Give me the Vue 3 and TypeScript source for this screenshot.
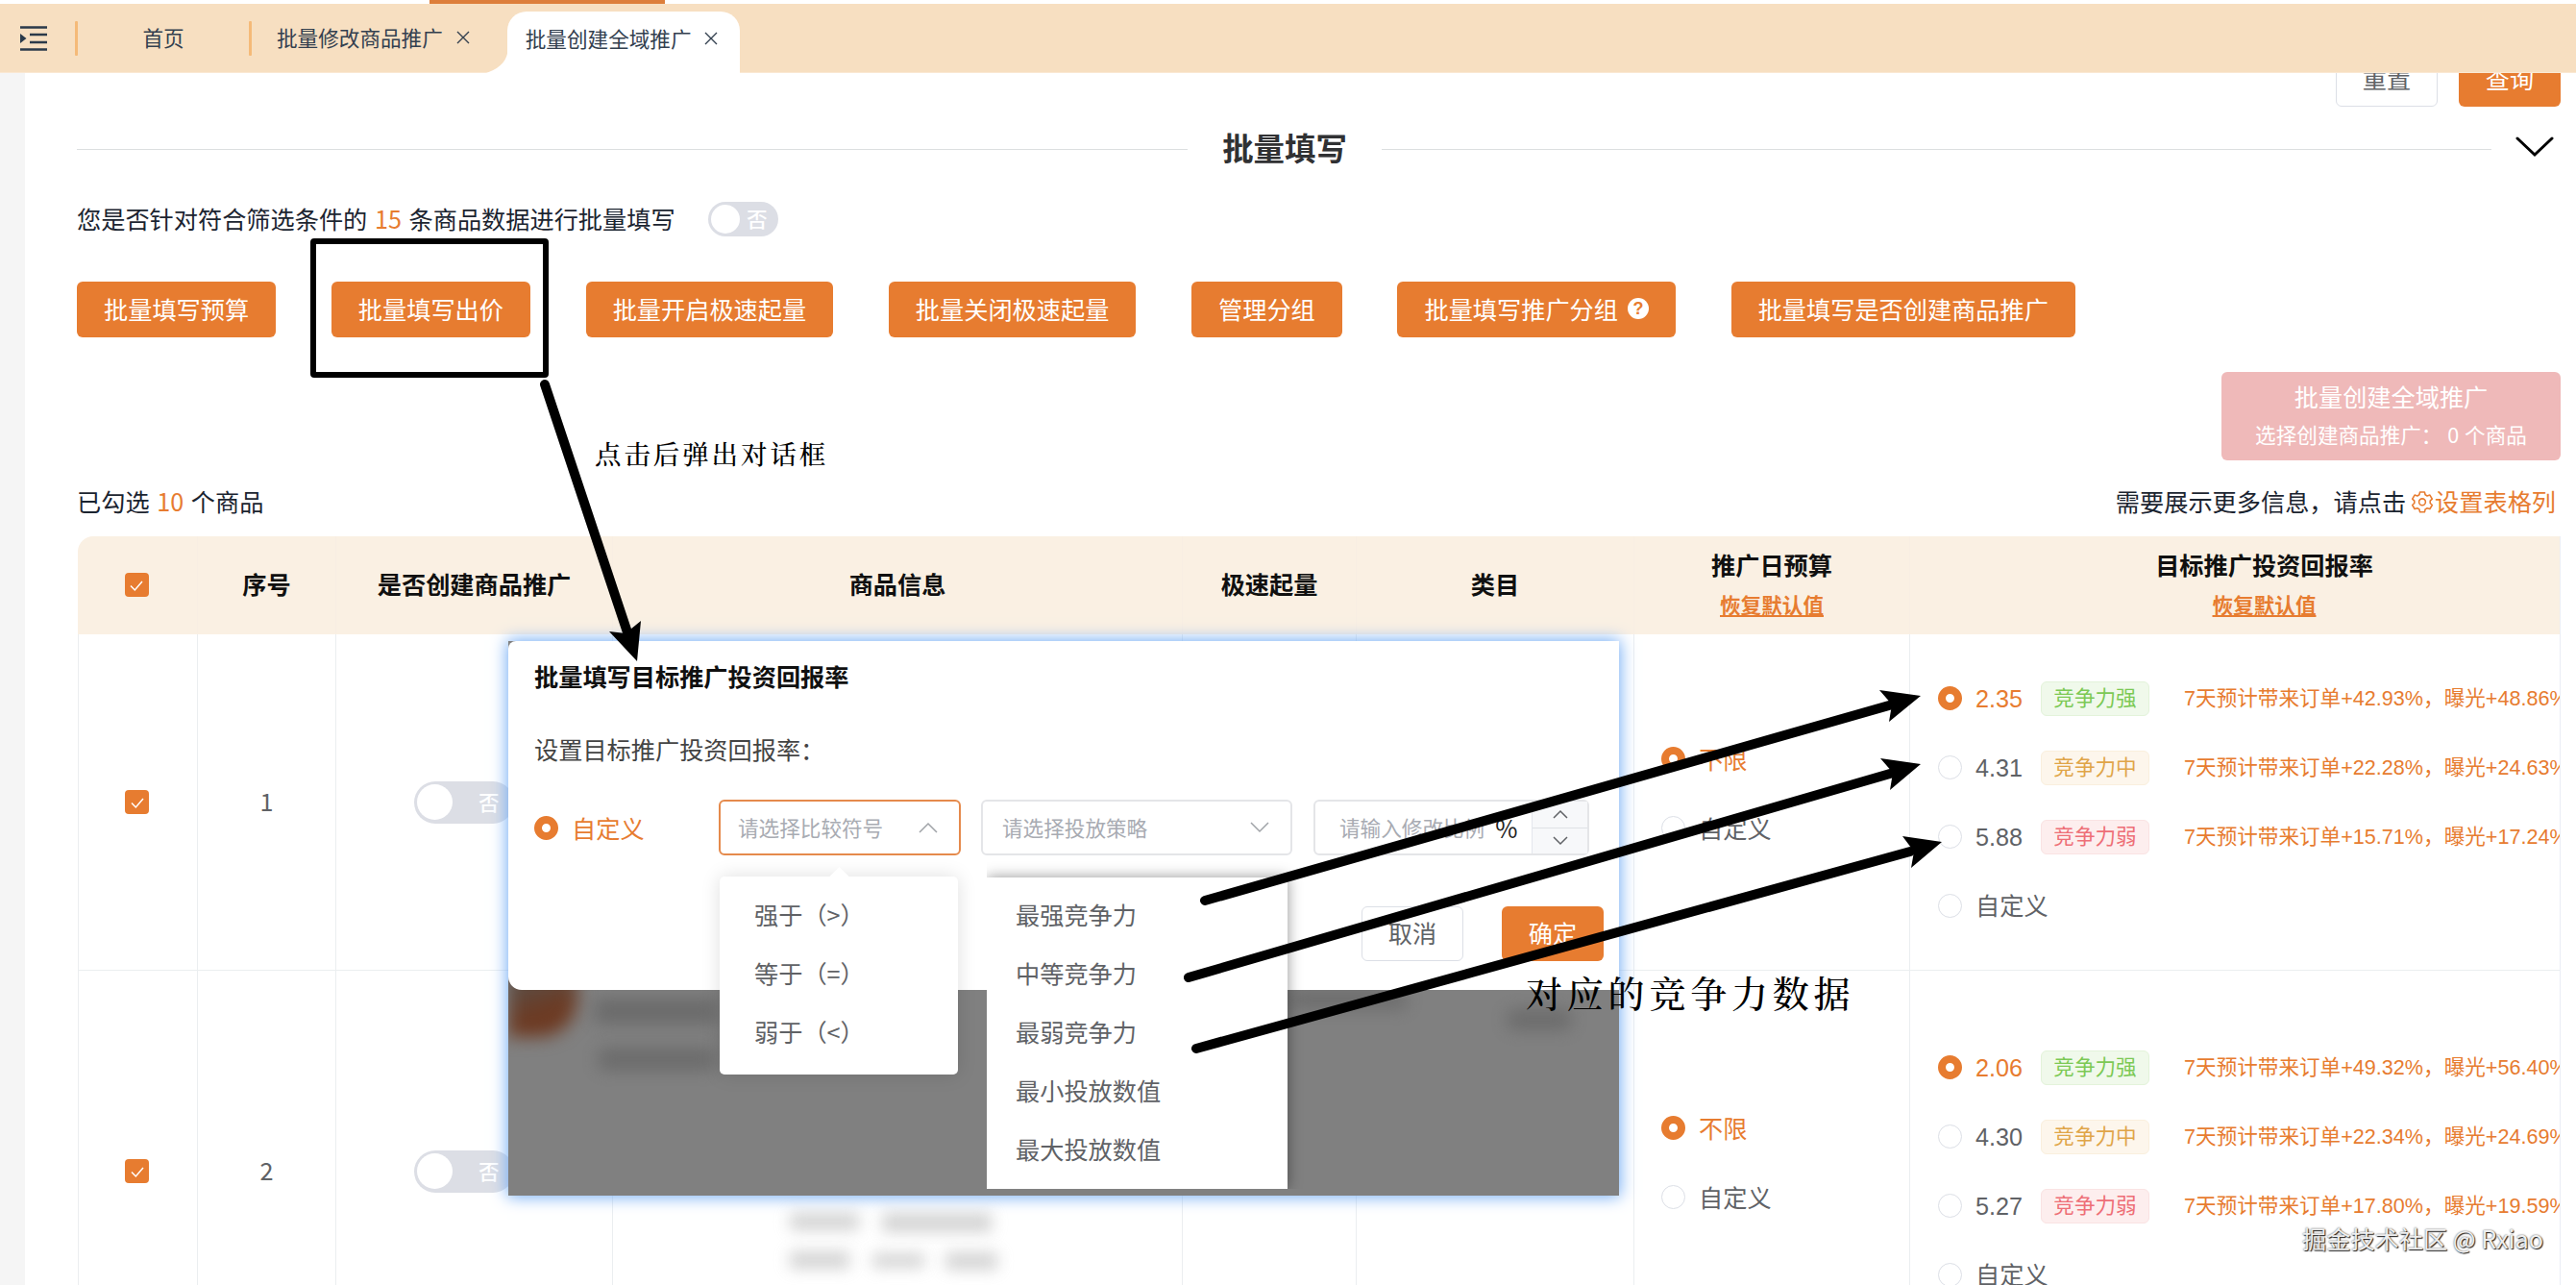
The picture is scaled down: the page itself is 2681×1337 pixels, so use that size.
<script setup lang="ts">
interface RoiOption { value: string; level: string; tone: string; order: string; exposure: string; checked: boolean }
interface Row { no: number; roi: RoiOption[] }

const actions: { label: string; help?: boolean }[] = [
  { label: '批量填写预算' },
  { label: '批量填写出价' },
  { label: '批量开启极速起量' },
  { label: '批量关闭极速起量' },
  { label: '管理分组' },
  { label: '批量填写推广分组', help: true },
  { label: '批量填写是否创建商品推广' },
]

const rows: Row[] = [
  {
    no: 1,
    roi: [
      { value: '2.35', level: '竞争力强', tone: 'green', order: '42.93', exposure: '48.86', checked: true },
      { value: '4.31', level: '竞争力中', tone: 'amber', order: '22.28', exposure: '24.63', checked: false },
      { value: '5.88', level: '竞争力弱', tone: 'red', order: '15.71', exposure: '17.24', checked: false },
    ],
  },
  {
    no: 2,
    roi: [
      { value: '2.06', level: '竞争力强', tone: 'green', order: '49.32', exposure: '56.40', checked: true },
      { value: '4.30', level: '竞争力中', tone: 'amber', order: '22.34', exposure: '24.69', checked: false },
      { value: '5.27', level: '竞争力弱', tone: 'red', order: '17.80', exposure: '19.59', checked: false },
    ],
  },
]

const operators: string[] = ['强于（>）', '等于（=）', '弱于（<）']
const strategies: string[] = ['最强竞争力', '中等竞争力', '最弱竞争力', '最小投放数值', '最大投放数值']
</script>

<template>
  <div class="screen">
    <div class="topline"><i></i></div>
    <header class="tabs">
      <svg class="menu" width="28" height="26" viewBox="0 0 28 26">
        <path d="M0 1.5H28M10 9H28M10 17H28M0 24.5H28" stroke="#2b3a4a" stroke-width="2.6" fill="none" />
        <path d="M0 8L6.5 13L0 18Z" fill="#2b3a4a" />
      </svg>
      <i class="sep"></i>
      <span class="tab home">首页</span>
      <i class="sep"></i>
      <span class="tab">批量修改商品推广
        <svg class="x" width="14" height="14" viewBox="0 0 14 14"><path d="M1 1L13 13M13 1L1 13" /></svg>
      </span>
      <span class="tab active">
        <svg class="flare" width="23" height="26" viewBox="0 0 23 26"><path d="M23 0C22 13 15 21 0 26H23Z" fill="#fff" /></svg>
        批量创建全域推广
        <svg class="x" width="14" height="14" viewBox="0 0 14 14"><path d="M1 1L13 13M13 1L1 13" /></svg>
      </span>
    </header>

    <main class="page">
      <div class="query">
        <button class="btn plain">重置</button>
        <button class="btn">查询</button>
      </div>

      <div class="divider">
        <i class="l1"></i><h2>批量填写</h2><i class="l2"></i>
        <svg width="40" height="22" viewBox="0 0 40 22"><path d="M2 2L20 19L38 2" fill="none" stroke="#000" stroke-width="3" stroke-linecap="round" /></svg>
      </div>

      <div class="ask">
        <span class="line">您是否针对符合筛选条件的 <em>15</em> 条商品数据进行批量填写</span>
        <span class="switch small"><i></i><b>否</b></span>
      </div>

      <div class="actions">
        <button v-for="a in actions" :key="a.label" class="btn">
          {{ a.label }}<span v-if="a.help" class="help">?</span>
        </button>
      </div>

      <div class="create">
        <div class="create-box"><p>批量创建全域推广</p><small>选择创建商品推广： 0 个商品</small></div>
      </div>

      <div class="info">
        <span class="line">已勾选 <em>10</em> 个商品</span>
        <span class="more">需要展示更多信息，请点击
          <em>
            <svg width="24" height="24" viewBox="0 0 24 24" fill="none" stroke="#e77c30" stroke-width="1.6" stroke-linejoin="round">
              <path d="M9.6 2h4.8l.7 2.8 2 1.2 2.8-.9 2.400 4.100-2.100 2v2.300l2.100 2-2.400 4.100-2.800-.9-2 1.200-.7 2.800H9.600l-.7-2.800-2-1.200-2.800.9-2.400-4.100 2.100-2v-2.300l-2.100-2 2.400-4.100 2.800.9 2-1.200z" />
              <circle cx="12" cy="12.300" r="3.400" />
            </svg>设置表格列</em>
        </span>
      </div>

      <section class="table">
        <div class="tr head">
          <div class="c pick"><span class="check"><svg width="18" height="18" viewBox="0 0 18 18"><path d="M3 9.500L7.300 14L15 5" /></svg></span></div>
          <div class="c txt">序号</div>
          <div class="c txt">是否创建商品推广</div>
          <div class="c txt">商品信息</div>
          <div class="c txt">极速起量</div>
          <div class="c txt">类目</div>
          <div class="c two">推广日预算<u>恢复默认值</u></div>
          <div class="c two">目标推广投资回报率<u>恢复默认值</u></div>
        </div>
        <div v-for="r in rows" :key="r.no" class="tr body" :class="'row' + r.no">
          <div class="c pick"><span class="check"><svg width="18" height="18" viewBox="0 0 18 18"><path d="M3 9.500L7.300 14L15 5" /></svg></span></div>
          <div class="c txt">{{ r.no }}</div>
          <div class="c"><span class="switch"><i></i><b>否</b></span></div>
          <div class="c"></div>
          <div class="c"></div>
          <div class="c"></div>
          <div class="c radios budget">
            <label class="on"><i class="radio"></i>不限</label>
            <label><i class="radio"></i>自定义</label>
          </div>
          <div class="c radios roi">
            <label v-for="o in r.roi" :key="o.value" :class="{ on: o.checked }">
              <i class="radio"></i>{{ o.value }}<span class="tag" :class="o.tone">{{ o.level }}</span>
              <span class="est">7天预计带来订单+{{ o.order }}%，曝光+{{ o.exposure }}%</span>
            </label>
            <label><i class="radio"></i>自定义</label>
          </div>
        </div>
      </section>
    </main>

    <div class="smudge s1"></div><div class="smudge s2"></div>
    <div class="smudge s3"></div><div class="smudge s4"></div><div class="smudge s5"></div>

    <section class="shot">
      <div class="brown"></div>
      <div class="dark d1"></div><div class="dark d2"></div><div class="dark d3"></div><div class="dark d4"></div>
      <div class="dialog">
        <h3>批量填写目标推广投资回报率</h3>
        <p>设置目标推广投资回报率：</p>
        <div class="form">
          <label class="on"><i class="radio"></i>自定义</label>
          <div class="field f1">请选择比较符号
            <svg width="20" height="12" viewBox="0 0 20 12"><path d="M1 11L10 2L19 11" /></svg>
          </div>
          <div class="field f2">请选择投放策略
            <svg width="20" height="12" viewBox="0 0 20 12"><path d="M1 1L10 10L19 1" /></svg>
          </div>
          <div class="field f3">
            <span>请输入修改比例</span><b>%</b>
            <div class="spin">
              <i><svg width="16" height="10" viewBox="0 0 16 10"><path d="M1 9L8 2L15 9" /></svg></i>
              <i><svg width="16" height="10" viewBox="0 0 16 10"><path d="M1 1L8 8L15 1" /></svg></i>
            </div>
          </div>
        </div>
        <div class="foot"><button class="btn plain">取消</button><button class="btn">确定</button></div>
      </div>
      <ul class="menu1"><li v-for="o in operators" :key="o">{{ o }}</li></ul>
      <ul class="menu2"><li v-for="s in strategies" :key="s">{{ s }}</li></ul>
    </section>

    <svg class="marks" width="2681" height="1337" viewBox="0 0 2681 1337">
      <rect x="326" y="251" width="242" height="139" rx="1" fill="none" stroke="#000" stroke-width="6" />
      <g stroke="#000" stroke-width="10" stroke-linecap="round">
        <path d="M567 400L653 658" />
        <path d="M1254 937L1966 734" />
        <path d="M1237 1017L1967 805" />
        <path d="M1245 1091L1988 886" />
      </g>
      <path d="M663 688L634 657L651 659L667 646Z" />
      <path d="M1999 724L1956 718L1969 733L1966 751Z" />
      <path d="M1999 795L1957 789L1970 804L1967 822Z" />
      <path d="M2021 876L1980 870L1992 886L1989 903Z" />
    </svg>
    <div class="note n1">点击后弹出对话框</div>
    <div class="note n2">对应的竞争力数据</div>
    <div class="water">掘金技术社区 @ Rxiao</div>
  </div>
</template>

<style>
body { overflow: hidden; background: #fff; }
</style>

<style scoped>
* { box-sizing: border-box; }
.screen { position: relative; width: 2681px; height: 1337px; overflow: hidden; background: #fff; color: #1b2430; font: 25.2px/36px 'Noto Sans CJK SC', sans-serif; white-space: nowrap; }
em { font-style: normal; color: #e77c30; }
h2, h3, p, ul { margin: 0; padding: 0; list-style: none; }
.topline { height: 4px; padding-left: 447px; }
.topline i { display: block; width: 245px; height: 4px; background: #dd7e3b; }
.tabs { height: 72px; background: #f7dfc1; border-bottom: 1px solid #fae8d3; display: flex; align-items: center; padding: 0 0 0 21px; font-size: 21.6px; color: #33404f; }
.menu { flex: none; margin-right: 29px; }
.sep { width: 3px; height: 36px; background: #f5ba78; border-radius: 1px; }
.tab { display: flex; align-items: center; padding-bottom: 1px; }
.home { width: 178px; justify-content: center; }
.tab .x { margin-left: 14px; stroke: #33404f; stroke-width: 1.4; }
.sep + .tab:not(.home) { margin-left: 26px; }
.active { position: relative; align-self: flex-end; width: 242px; height: 64px; margin: 0 0 -1px 39px; padding: 0 0 8px 19px; background: #fff; border-radius: 20px 20px 0 0; }
.active .x { margin-left: 13px; }
.flare { position: absolute; left: -22px; bottom: 0; }
.page { height: 1261px; border-left: 26px solid #f5f5f5; padding-left: 54px; overflow: hidden; }
.btn { height: 58px; padding: 0 28px 3px; border: 0; border-radius: 6px; background: #e77c30; color: #fff; font: inherit; display: flex; align-items: center; justify-content: center; }
.plain { background: #fff; color: #606266; border: 1px solid #dcdfe6; }
.query { display: flex; justify-content: flex-end; gap: 22px; height: 35px; align-items: flex-end; padding-right: 16px; overflow: hidden; }
.query .btn { width: 106px; flex: none; }
.divider { display: flex; align-items: center; height: 48px; margin-top: 20px; }
.divider i { height: 1px; background: #dcdfe0; }
.l1 { width: 1156px; }
.l2 { width: 1155px; }
.divider h2 { width: 202px; text-align: center; font-size: 32.4px; font-weight: 700; color: #303133; padding-bottom: 4px; }
.divider svg { margin: -4px 0 0 25px; }
.ask { display: flex; align-items: center; height: 36px; margin-top: 31px; }
.line { padding-bottom: 2px; }
.line em { margin: 0 2px; }
.switch { display: flex; align-items: center; justify-content: space-between; width: 104px; height: 44px; border-radius: 22px; background: #dcdee5; padding: 0 12px 0 3px; color: #fff; font-size: 21.6px; }
.switch i { width: 37px; height: 37px; border-radius: 50%; background: #fff; }
.switch b { font-weight: 500; padding-bottom: 2px; }
.body .switch { margin-left: -22px; padding-right: 15px; }
.small { width: 73px; height: 36px; margin-left: 34px; padding-right: 11px; }
.small i { width: 30px; height: 30px; }
.actions { display: flex; gap: 57.7px; margin-top: 47px; }
.help { width: 22px; height: 22px; border-radius: 50%; background: #fff; color: #e77c30; font: bold 18px/22px 'Liberation Sans', sans-serif; margin-left: 10px; text-align: center; }
.create { display: flex; justify-content: flex-end; padding: 36px 16px 0 0; }
.create-box { width: 353px; height: 92px; border-radius: 6px; background: #efb9b9; color: #fff; text-align: center; padding-top: 6px; line-height: 39px; }
.create-box small { display: block; font-size: 21.6px; word-spacing: 1px; }
.info { display: flex; justify-content: space-between; align-items: center; height: 36px; margin-top: 24px; padding-right: 21px; }
.info .line { padding-bottom: 0; }
.more, .more em { display: flex; align-items: center; }
.more em svg { margin: 2px 1px 0 5px; }
.table { margin: 19px 0 0 1px; width: 2584px; overflow: hidden; border-radius: 16px 0 0 0; border-right: 1px solid #ebeef5; }
.tr { display: grid; grid-template-columns: 125px 144px 288px 593px 181px 289px 287px 738px; width: 2645px; }
.c { display: flex; align-items: center; justify-content: center; border-right: 1px solid #ebeef0; border-bottom: 1px solid #ebeef0; }
.pick { padding-right: 2px; }
.txt { padding-bottom: 3px; }
.head { height: 102px; background: #faf0e3; font-weight: 700; color: #101010; }
.head .c { border-color: transparent; border-right-color: #f8eee3; }
.two { flex-direction: column; padding-bottom: 3px; }
.two u { color: #e77c30; font-size: 21.6px; line-height: 34px; margin-top: 7px; text-underline-offset: 2px; text-decoration-thickness: 2px; }
.body { color: #606266; }
.body .c:first-child { border-left: 1px solid #ebeef0; }
.row1 { height: 350px; }
.row2 { height: 418px; }
.check { width: 25px; height: 25px; border-radius: 4px; background: #e77c30; display: flex; align-items: center; justify-content: center; }
.check path { fill: none; stroke: #fff; stroke-width: 1.5; }
.radios { flex-direction: column; align-items: flex-start; padding-left: 28px; }
.budget { padding-bottom: 19px; }
.radios label { display: flex; align-items: center; height: 72px; }
.radio { flex: none; width: 25px; height: 25px; border: 1px solid #dcdfe6; border-radius: 50%; background: #fff; margin-right: 14px; }
.on { color: #e77c30; }
.on .radio { border: 8.5px solid #e77c30; }
.roi { font-family: 'Liberation Sans', 'Noto Sans CJK SC', sans-serif; padding-left: 29px; }
.tag { margin-left: 19px; width: 113px; height: 36px; border: 1px solid; border-radius: 6px; font-size: 21.6px; line-height: 33px; text-align: center; }
.green { color: #7cc955; background: #f0f9eb; border-color: #e3f3da; }
.amber { color: #e0a548; background: #fdf6ec; border-color: #faefdd; }
.red { color: #ee6f77; background: #fdeeee; border-color: #fae3e3; }
.est { margin-left: 36px; font-size: 21.6px; color: #e77c30; }
.shot { position: absolute; left: 529px; top: 667px; width: 1156px; height: 577px; background: #808080; box-shadow: 0 0 16px 1px #6ea9f4; }
.dialog { height: 363px; background: #fff; border-radius: 8px 0 0 14px; padding: 18px 16px 0 27px; position: relative; overflow: hidden; display: flex; flex-direction: column; }
.dialog h3 { font-size: 25.2px; line-height: 36px; font-weight: 700; color: #101010; }
.dialog p { margin-top: 40px; line-height: 36px; color: #444; }
.form { display: flex; align-items: center; height: 58px; margin-top: 35px; }
.form label { width: 192px; display: flex; align-items: center; }
.field { height: 58px; border: 2px solid #e4e5e8; border-radius: 6px; font-size: 21.6px; color: #a8abb2; display: flex; align-items: center; justify-content: space-between; padding: 0 22px 0 18px; }
.field svg, .spin svg { fill: none; stroke: #a0a3a8; stroke-width: 1.5; }
.f1 { width: 252px; border-color: #e58a4c; }
.f2 { width: 324px; margin-left: 21px; padding-left: 20px; }
.f3 { width: 287px; margin-left: 22px; padding: 0 0 0 25px; justify-content: flex-start; }
.f3 b { font-weight: 400; font-size: 25.2px; color: #222; margin-left: 11px; width: 40px; }
.f3 span { flex: none; }
.spin { flex: none; width: 58px; height: 54px; border-left: 1px solid #e4e7ed; background: #f7f8fa; display: flex; flex-direction: column; }
.spin i { flex: 1; display: flex; align-items: center; justify-content: center; }
.spin i + i { border-top: 1px solid #dfe1e6; }
.spin svg { stroke: #606266; }
.foot { display: flex; justify-content: flex-end; gap: 40px; margin-top: 53px; }
.foot .btn { width: 106px; height: 57px; }
.menu1, .menu2 { position: absolute; background: #fff; color: #606266; line-height: 61px; }
.menu1 { left: 220px; top: 245px; width: 248px; height: 206px; border-radius: 5px; padding: 9px 0 0 36px; box-shadow: 0 0 20px rgba(0, 0, 0, 0.13); }
.menu1::before { content: ''; position: absolute; left: 117px; top: -7px; width: 15px; height: 15px; background: #fff; transform: rotate(45deg); }
.menu2 { left: 498px; top: 246px; width: 313px; height: 324px; padding: 8px 0 0 30px; box-shadow: 0 0 14px rgba(0, 0, 0, 0.42); clip-path: inset(-24px -20px 0 0); }
.brown { position: absolute; left: 0; top: 346px; width: 72px; height: 66px; background: linear-gradient(160deg, #5c4a40 20%, #6d3a22 60%); filter: blur(9px); border-radius: 0 10px 40px 0; clip-path: inset(-20px -30px -30px 0); }
.dark { position: absolute; background: #5c5c5c; filter: blur(9px); opacity: 0.6; }
.d1 { left: 90px; top: 372px; width: 128px; height: 26px; }
.d2 { left: 94px; top: 424px; width: 120px; height: 22px; }
.d3 { left: 815px; top: 364px; width: 120px; height: 18px; }
.d4 { left: 1040px; top: 384px; width: 66px; height: 20px; }
.smudge { position: absolute; background: #bbb; filter: blur(8px); opacity: 0.65; }
.s1 { left: 822px; top: 1262px; width: 72px; height: 18px; }
.s2 { left: 918px; top: 1262px; width: 114px; height: 20px; }
.s3 { left: 822px; top: 1302px; width: 62px; height: 18px; }
.s4 { left: 908px; top: 1304px; width: 54px; height: 15px; }
.s5 { left: 984px; top: 1303px; width: 54px; height: 18px; }
.marks { position: absolute; left: 0; top: 0; }
.note { position: absolute; color: #000; font-family: 'Noto Serif CJK SC', 'Noto Sans CJK SC', serif; font-weight: 500; }
.n1 { left: 619px; top: 453px; font-size: 27.5px; letter-spacing: 2.9px; }
.n2 { left: 1588px; top: 1009px; font-size: 38px; letter-spacing: 4.8px; line-height: 46px; }
.water { position: absolute; left: 2396px; top: 1270px; color: #eee; text-shadow: 1px 1px 1px #222, 0 0 2px #555; }
</style>
